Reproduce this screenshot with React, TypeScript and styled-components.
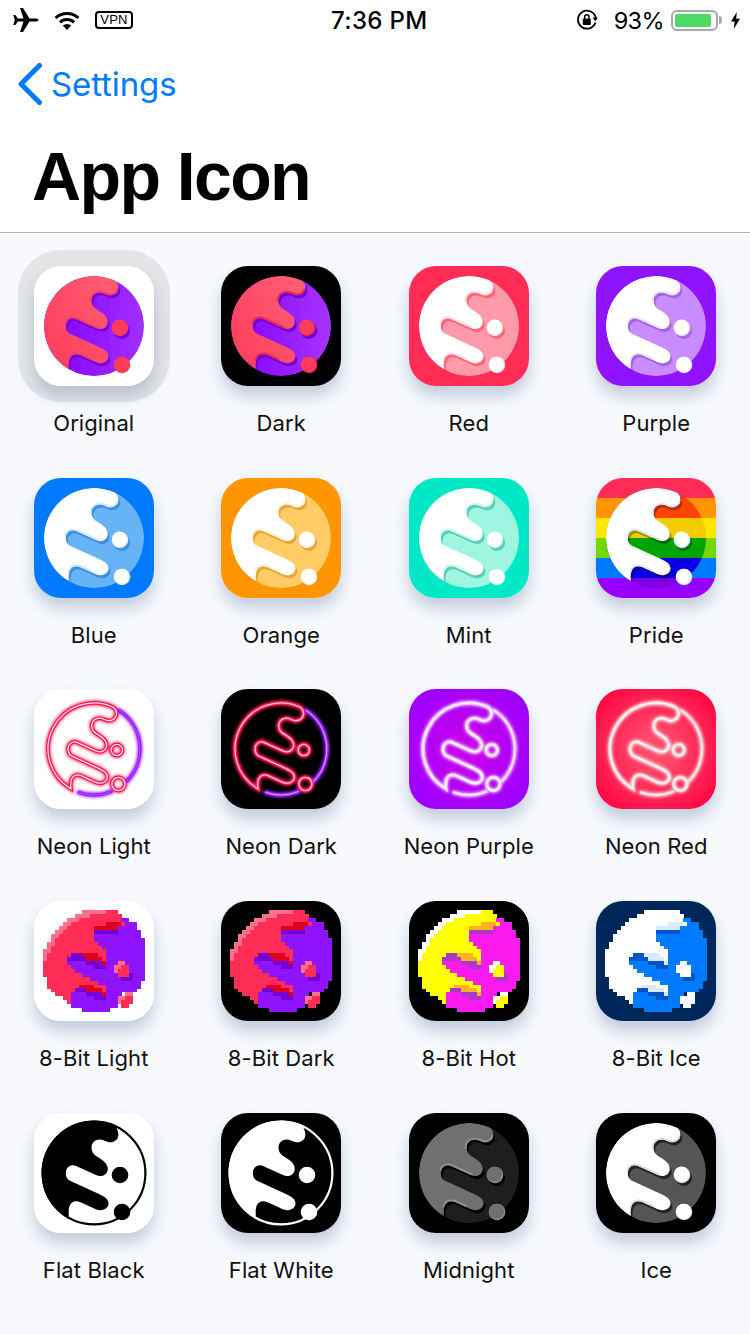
import React from "react";
import styled, { createGlobalStyle } from "styled-components";

const Global = createGlobalStyle`
  html, body { margin: 0; padding: 0; background: #f7f9fd; }
  body { font-family: Inter, "Liberation Sans", sans-serif; }
`;

const Page = styled.div`
  width: 750px;
  height: 1334px;
  overflow: hidden;
  background: #f7f9fd;
`;
const Header = styled.header`
  height: 232px;
  background: #fff;
  border-bottom: 1px solid #b4b4b6;
  display: flex;
  flex-direction: column;
`;
const StatusBar = styled.div`
  height: 40px;
  display: grid;
  grid-template-columns: 331px auto 1fr;
  align-items: center;
  color: #000;
`;
const LeftStatus = styled.div`
  display: flex;
  align-items: center;
  padding-left: 12px;
  gap: 15px;
`;
const RightStatus = styled.div`
  display: flex;
  align-items: center;
  justify-content: flex-end;
  padding-right: 10px;
`;
const Time = styled.div`
  font-size: 24px;
  font-weight: 500;
  letter-spacing: 0.35px;
`;
const Percent = styled.div`
  font-size: 23.5px;
  font-weight: 400;
  margin-left: 16px;
  letter-spacing: -0.6px;
`;
const VpnBadge = styled.div`
  width: 38px;
  height: 18px;
  box-sizing: border-box;
  border: 2px solid #000;
  border-radius: 4px;
  font: 400 13px/14px "Liberation Sans", sans-serif;
  text-align: center;
  letter-spacing: 0.2px;
`;
const Battery = styled.div`
  display: flex;
  align-items: center;
  margin-left: 7px;
  margin-right: 9px;
`;
const BatteryBody = styled.div`
  width: 47px;
  height: 21px;
  box-sizing: border-box;
  border: 2px solid #a9a9a9;
  border-radius: 6px;
  padding: 2px;
`;
const BatteryFill = styled.div<{ $level: number }>`
  width: ${(p) => p.$level}%;
  height: 100%;
  background: #4cd964;
  border-radius: 2px;
`;
const BatteryNub = styled.div`
  width: 3px;
  height: 8px;
  margin-left: 1px;
  background: #a9a9a9;
  border-radius: 0 3px 3px 0;
`;
const NavRow = styled.div`
  height: 88px;
  display: flex;
  align-items: center;
  padding-left: 18px;
  gap: 9px;
  color: #007aff;
`;
const BackLabel = styled.div`
  font-size: 33px;
  font-weight: 400;
  letter-spacing: -0.1px;
`;
const Title = styled.h1`
  margin: 2px 0 0;
  padding-left: 32px;
  font: 700 68px/92px "Liberation Sans", sans-serif;
  letter-spacing: -1.6px;
  color: #000;
`;
const Grid = styled.main`
  display: grid;
  grid-template-columns: repeat(4, 187.5px);
  grid-auto-rows: 211.75px;
  padding-top: 32.9px;
`;
const Cell = styled.div`
  display: flex;
  flex-direction: column;
  align-items: center;
`;
const Tile = styled.div<{ $selected?: boolean }>`
  width: 120px;
  height: 120px;
  border-radius: 27px;
  box-shadow: 0 10px 16px rgba(100, 125, 160, 0.36)
    ${(p) => (p.$selected ? ", 0 0 0 16px #e4e5e7" : "")};
  overflow: hidden;
  flex: none;
`;
const TileArt = styled.svg`
  display: block;
  width: 120px;
  height: 120px;
`;
const Label = styled.div`
  margin-top: 23px;
  font-size: 22px;
  line-height: 28px;
  letter-spacing: 0.1px;
  color: #111;
  white-space: nowrap;
`;

const litPath = (r: number, close = true) => {
  const sy = 60 - Math.sqrt(r * r - 21 * 21);
  const ey = 60 + Math.sqrt(r * r - 25 * 25);
  return `M81 ${sy} C84 17 85 21 84 24 C83 28 78 30 74 29 C71 28 69 26.5 66 26.5 C61 26.5 57.5 30 57.5 34.5 C57.5 38 59 41 62 43 C65.5 45 69 47 71.5 50 C74.5 54 74.5 58 71.5 61 C69 63.5 65.5 63.5 62 62 L42 53 C38 51 34 53 32.5 56.5 C31 60.5 32 65.5 35.5 67.5 L65 81 C70 83.5 74 85.5 74.5 90 C75 94.5 70 98 65 97 C62 96.5 59 95 56 93.5 L46 89 C41 87 37 89 35.5 93 C34.5 96 34.5 100 35 ${ey} A${r} ${r} 0 0 1 81 ${sy}${close ? " Z" : ""}`;
};
const NOTCHES = [
  "M84 24 C83 28 78 30 74 29 C71 28 69 26.5 66 26.5 C61 26.5 57.5 30 57.5 34.5",
  "M62 62 L42 53 C38 51 34 53 32.5 56.5",
  "M56 93.5 L46 89 C41 87 37 89 35.5 93",
];

type Logo = {
  bg: string;
  lit: string;
  dark: string;
  shadow: string;
  pale: string;
  dot?: string;
  litStops?: [string, string];
  darkStops?: [string, string];
  stripes?: boolean;
  blur?: boolean;
};

const STRIPES = ["#ff2d55", "#ff9500", "#ffe600", "#76d600", "#007aff", "#9600ff"];
const DEEP_STRIPES = ["#e0304a", "#ff4400", "#f2cb00", "#00a400", "#0a00e6", "#8000e0"];

function Planet({ logo, id }: { logo: Logo; id: string }) {
  const lit = logo.litStops ? `url(#${id}l)` : logo.lit;
  const dark = logo.darkStops ? `url(#${id}d)` : logo.dark;
  const dot = logo.dot ?? (logo.litStops ? logo.litStops[0] : logo.lit);
  const path = litPath(50);
  return (
    <TileArt viewBox="0 0 120 120">
      <defs>
        <clipPath id={`${id}c`}>
          <circle cx="60" cy="60" r="50" />
        </clipPath>
        <clipPath id={`${id}p`}>
          <path d={path} />
        </clipPath>
        {logo.litStops && (
          <linearGradient id={`${id}l`} x1="0" y1="1" x2="1" y2="0.3">
            <stop offset="0" stopColor={logo.litStops[0]} />
            <stop offset="1" stopColor={logo.litStops[1]} />
          </linearGradient>
        )}
        {logo.darkStops && (
          <linearGradient id={`${id}d`} x1="0" y1="0.5" x2="1" y2="0.5">
            <stop offset="0" stopColor={logo.darkStops[0]} />
            <stop offset="1" stopColor={logo.darkStops[1]} />
          </linearGradient>
        )}
        <filter id={`${id}b`} x="-10%" y="-10%" width="120%" height="120%">
          <feGaussianBlur stdDeviation="0.7" />
        </filter>
      </defs>
      <rect width="120" height="120" fill={logo.bg} />
      {logo.stripes &&
        STRIPES.map((c, i) => <rect key={c} x="0" y={i * 20} width="120" height="20" fill={c} />)}
      <g filter={logo.blur ? `url(#${id}b)` : undefined}>
        <g clipPath={`url(#${id}c)`}>
          {logo.stripes ? (
            DEEP_STRIPES.map((c, i) => <rect key={c} x="0" y={i * 20} width="120" height="20" fill={c} />)
          ) : (
            <circle cx="60" cy="60" r="50" fill={dark} />
          )}
          <path d={path} fill={logo.shadow} transform="translate(1.8 3)" />
          <path d={path} fill={lit} />
          <g clipPath={`url(#${id}p)`}>
            {NOTCHES.map((d) => (
              <path key={d} d={d} fill="none" stroke={logo.pale} strokeWidth="3.6" strokeLinecap="round" />
            ))}
          </g>
        </g>
        <circle cx="87.8" cy="64.6" r="8.3" fill={logo.shadow} />
        <circle cx="86" cy="62" r="8.3" fill={logo.pale} />
        <circle cx="85.5" cy="61.2" r="7.6" fill={dot} />
        <circle cx="88" cy="99" r="8.3" fill={logo.pale} />
        <circle cx="87.6" cy="98.4" r="7.7" fill={dot} />
      </g>
    </TileArt>
  );
}

function FlatMark({ ink, paper }: { ink: string; paper: string }) {
  return (
    <TileArt viewBox="0 0 120 120">
      <rect width="120" height="120" fill={paper} />
      <circle cx="60" cy="60" r="51.4" fill="none" stroke={ink} strokeWidth="2.2" />
      <path d={litPath(52.5)} fill={ink} />
      <circle cx="86" cy="62" r="8.3" fill={ink} />
      <circle cx="88" cy="99" r="8.3" fill={ink} />
    </TileArt>
  );
}

type NeonSpec = {
  center?: string;
  edge: string;
  glow: string;
  line: string;
  core: string;
  arcGlow: string;
  arc: string;
  arcCore: string;
};

function NeonStrokes({ line, arcs, width, color }: { line: boolean; arcs: boolean; width: number; color: string }) {
  const common = { fill: "none", stroke: color, strokeWidth: width, strokeLinecap: "round" as const };
  return (
    <>
      {line && (
        <>
          <g transform="translate(60 60) scale(.92) translate(-60 -60)">
            <path d={litPath(50, false)} {...common} strokeWidth={width / 0.92} />
          </g>
          <circle cx="82.8" cy="61" r="5.6" {...common} />
          <circle cx="84.4" cy="95" r="6.6" {...common} />
        </>
      )}
      {arcs && (
        <>
          <path d="M85.2 21.5 A46 46 0 0 1 93 92" {...common} />
          <path d="M77 102.7 A46 46 0 0 1 45 103.5" {...common} />
        </>
      )}
    </>
  );
}

function NeonMark({ spec, id }: { spec: NeonSpec; id: string }) {
  return (
    <TileArt viewBox="0 0 120 120">
      <defs>
        <radialGradient id={`${id}g`} cx="0.5" cy="0.5" r="0.6">
          <stop offset="0.2" stopColor={spec.center ?? spec.edge} />
          <stop offset="1" stopColor={spec.edge} />
        </radialGradient>
        <filter id={`${id}f`} x="-20%" y="-20%" width="140%" height="140%">
          <feGaussianBlur stdDeviation="1.8" />
        </filter>
      </defs>
      <rect width="120" height="120" fill={`url(#${id}g)`} />
      <g filter={`url(#${id}f)`}>
        <NeonStrokes line arcs={false} width={5} color={spec.glow} />
        <NeonStrokes line={false} arcs width={5} color={spec.arcGlow} />
      </g>
      <NeonStrokes line arcs={false} width={3.6} color={spec.line} />
      <NeonStrokes line={false} arcs width={3} color={spec.arc} />
      <NeonStrokes line arcs={false} width={1.3} color={spec.core} />
      <NeonStrokes line={false} arcs width={1} color={spec.arcCore} />
    </TileArt>
  );
}

const PIXEL_ROWS = [
  "..........HHHHHHLLL",
  "........HHHHLLLLLLLL",
  "......HHHLLLLLLLLLLLDD",
  ".....HHLLLLLLLLLAAAALDDD",
  "....HHLLLLLLLAAAAAADDDDD",
  "...HHLLLLLLLLSSSSSSDDDDDD",
  "..HHLLLLLLLLLDDDDDDDDDDDD",
  "..HLLLLLLLLLLDDDDDDDDDDDDD",
  ".HHLLLLLLLLLLLDDDDDDDDDDDD",
  ".HLLLLLLLLLLLLLDDDDDDDDDDD",
  "HHLLLLLLLLLLLLLLDDDDDDDDDD",
  "HLLLLLLSSSAAAALLDDDDDDDDDD",
  "HLLLLLSSSSSAAAALDDDDDDDDDD",
  "LLLLLLDDDDDSSSSADDDHHDDDDD",
  "LLLLLLLDDDDDDSSSDDHHLLDDDD",
  "LLLLLLLLDDDDDDDDDDHLLLDDDD",
  "LLLLLLLLLLDDDDDDDDDLLLSDDD",
  ".LLLLLLLLLLLDDDDDDDDSSSDDD",
  ".LLLLLLLLLLLLLDDDDDDDDDDD",
  ".LLLLLLLLAAAALLLDDDDDDDDD",
  "..LLLLLLSSSAAAALDDDDDDDD",
  "...LLLLDDDDSSSSADDDD.HH",
  ".....LLDDDDDDSSSDDDHHLL",
  "......LDDDDDDDDDDDDHLLL",
  ".......DDDDDDDDDDDD.LL",
  "..........DDDDDDD",
];

type PixelPalette = { bg: string; L: string; H: string; A: string; S: string; D: string };

function PixelMark({ palette }: { palette: PixelPalette }) {
  const size = 3.9;
  return (
    <TileArt viewBox="0 0 120 120" shapeRendering="crispEdges">
      <rect width="120" height="120" fill={palette.bg} />
      {PIXEL_ROWS.flatMap((row, y) =>
        row.split("").map((ch, x) =>
          ch === "." ? null : (
            <rect
              key={`${x}-${y}`}
              x={9.4 + x * size}
              y={9.4 + y * size}
              width={size + 0.1}
              height={size + 0.1}
              fill={palette[ch as keyof PixelPalette]}
            />
          )
        )
      )}
    </TileArt>
  );
}

const flat = (bg: string, dark: string, shadow: string, pale: string): Logo => ({ bg, lit: "#fff", dark, shadow, pale });

const pixelRed = { L: "#ff2d55", H: "#ff6f8a", A: "#dd0020", S: "#7400d6", D: "#9013fe" };

type Item = { name: string; art: (id: string) => React.ReactNode; selected?: boolean };

const ITEMS: Item[] = [
  {
    name: "Original",
    selected: true,
    art: (id) => (
      <Planet
        id={id}
        logo={{
          bg: "#fff", lit: "", dark: "", shadow: "#7a00e0", pale: "#f0405f", blur: true,
          litStops: ["#ff3b5c", "#ff5c70"], darkStops: ["#8400ff", "#a030ff"],
        }}
      />
    ),
  },
  {
    name: "Dark",
    art: (id) => (
      <Planet
        id={id}
        logo={{
          bg: "#000", lit: "", dark: "", shadow: "#6f00d6", pale: "#e8274f",
          litStops: ["#ff3b5c", "#ff5c70"], darkStops: ["#8400ff", "#a633ff"],
        }}
      />
    ),
  },
  { name: "Red", art: (id) => <Planet id={id} logo={flat("#ff2d55", "#ff9aaa", "#ff6478", "#ffd9df")} /> },
  { name: "Purple", art: (id) => <Planet id={id} logo={flat("#9013fe", "#c88cff", "#a266e2", "#efe0ff")} /> },
  { name: "Blue", art: (id) => <Planet id={id} logo={flat("#007aff", "#66b3f8", "#3d8fdf", "#d3e8ff")} /> },
  { name: "Orange", art: (id) => <Planet id={id} logo={flat("#ff9500", "#ffcc66", "#e6a63c", "#fff0d0")} /> },
  { name: "Mint", art: (id) => <Planet id={id} logo={flat("#00e8c6", "#9ef5e0", "#5bccb5", "#c8faf0")} /> },
  {
    name: "Pride",
    art: (id) => (
      <Planet id={id} logo={{ bg: "#fff", lit: "#fff", dark: "", shadow: "rgba(0,0,0,.3)", pale: "#d9e8ff", stripes: true }} />
    ),
  },
  {
    name: "Neon Light",
    art: (id) => (
      <NeonMark id={id} spec={{ edge: "#fff", glow: "#ff2a60", line: "#ff1050", core: "#ffe6ec", arcGlow: "#a020ff", arc: "#9a14ff", arcCore: "#b050ff" }} />
    ),
  },
  {
    name: "Neon Dark",
    art: (id) => (
      <NeonMark id={id} spec={{ edge: "#000", glow: "#ff1a50", line: "#ff1a55", core: "#ffc8d6", arcGlow: "#9a20ff", arc: "#a030ff", arcCore: "#d8a0ff" }} />
    ),
  },
  {
    name: "Neon Purple",
    art: (id) => (
      <NeonMark id={id} spec={{ center: "#c400ee", edge: "#9c00ff", glow: "#f4a8ff", line: "#f0c0ff", core: "#fff", arcGlow: "#f4a8ff", arc: "#f0c0ff", arcCore: "#fff" }} />
    ),
  },
  {
    name: "Neon Red",
    art: (id) => (
      <NeonMark id={id} spec={{ center: "#ff4a6a", edge: "#ff0a45", glow: "#ffc0c8", line: "#ffc8d0", core: "#fff", arcGlow: "#ffc0c8", arc: "#ffc8d0", arcCore: "#fff" }} />
    ),
  },
  { name: "8-Bit Light", art: () => <PixelMark palette={{ bg: "#fff", ...pixelRed }} /> },
  { name: "8-Bit Dark", art: () => <PixelMark palette={{ bg: "#000", ...pixelRed }} /> },
  {
    name: "8-Bit Hot",
    art: () => <PixelMark palette={{ bg: "#000", L: "#ffff00", H: "#fff", A: "#ffb01f", S: "#a938c8", D: "#f91af0" }} />,
  },
  {
    name: "8-Bit Ice",
    art: () => <PixelMark palette={{ bg: "#00275a", L: "#fff", H: "#fff", A: "#dbe9ff", S: "#0056c8", D: "#007aff" }} />,
  },
  { name: "Flat Black", art: () => <FlatMark ink="#000" paper="#fff" /> },
  { name: "Flat White", art: () => <FlatMark ink="#fff" paper="#000" /> },
  {
    name: "Midnight",
    art: (id) => <Planet id={id} logo={{ bg: "#000", lit: "#707070", dark: "#1e1e1e", shadow: "#000", pale: "#949494" }} />,
  },
  {
    name: "Ice",
    art: (id) => <Planet id={id} logo={{ bg: "#000", lit: "#fff", dark: "#555", shadow: "#232323", pale: "#dcdcdc" }} />,
  },
];

const Airplane = () => (
  <svg width="27" height="24" viewBox="0 0 26 24">
    <path d="M26 12C26 13.2 24 13.6 22 13.6H17L10.5 24H7.5L11 13.6H5.5L2.8 17H.8L2.3 12 .8 7H2.8L5.5 10.4H11L7.5 0H10.5L17 10.4H22C24 10.4 26 10.8 26 12Z" fill="#000" />
  </svg>
);
const Wifi = () => (
  <svg width="26" height="19" viewBox="0 0 26 19">
    <path d="M1.6 7A16.5 16.5 0 0 1 24.4 7" fill="none" stroke="#000" strokeWidth="3" />
    <path d="M6 11.4A10 10 0 0 1 20 11.4" fill="none" stroke="#000" strokeWidth="3" />
    <path d="M13 19L8.8 14.6A6 6 0 0 1 17.2 14.6Z" fill="#000" />
  </svg>
);
const RotationLock = () => (
  <svg width="22" height="22" viewBox="0 0 22 22">
    <path d="M19.5 13.5A9 9 0 1 1 19.8 9" fill="none" stroke="#000" strokeWidth="1.8" />
    <path d="M16.6 8.4H22L19.3 12.2Z" fill="#000" />
    <rect x="6.8" y="9.6" width="8" height="6.4" rx="1" fill="#000" />
    <path d="M8.6 10V8A2.2 2.2 0 0 1 13 8V10" fill="none" stroke="#000" strokeWidth="1.4" />
  </svg>
);
const Bolt = () => (
  <svg width="9" height="17" viewBox="0 0 9 17">
    <path d="M5.8 0L0 9.6H3.6L2.8 17 9 6.8H5.2Z" fill="#000" />
  </svg>
);
const Chevron = () => (
  <svg width="24" height="42" viewBox="0 0 24 42">
    <path d="M21.5 2.5L3 21 21.5 39.5" fill="none" stroke="#007aff" strokeWidth="5" strokeLinecap="round" strokeLinejoin="round" />
  </svg>
);

export default function App() {
  return (
    <Page>
      <Global />
      <Header>
        <StatusBar>
          <LeftStatus>
            <Airplane />
            <Wifi />
            <VpnBadge>VPN</VpnBadge>
          </LeftStatus>
          <Time>7:36 PM</Time>
          <RightStatus>
            <RotationLock />
            <Percent>93%</Percent>
            <Battery>
              <BatteryBody>
                <BatteryFill $level={93} />
              </BatteryBody>
              <BatteryNub />
            </Battery>
            <Bolt />
          </RightStatus>
        </StatusBar>
        <NavRow>
          <Chevron />
          <BackLabel>Settings</BackLabel>
        </NavRow>
        <Title>App Icon</Title>
      </Header>
      <Grid>
        {ITEMS.map((item, i) => (
          <Cell key={item.name}>
            <Tile $selected={item.selected}>{item.art(`ic${i}`)}</Tile>
            <Label>{item.name}</Label>
          </Cell>
        ))}
      </Grid>
    </Page>
  );
}
